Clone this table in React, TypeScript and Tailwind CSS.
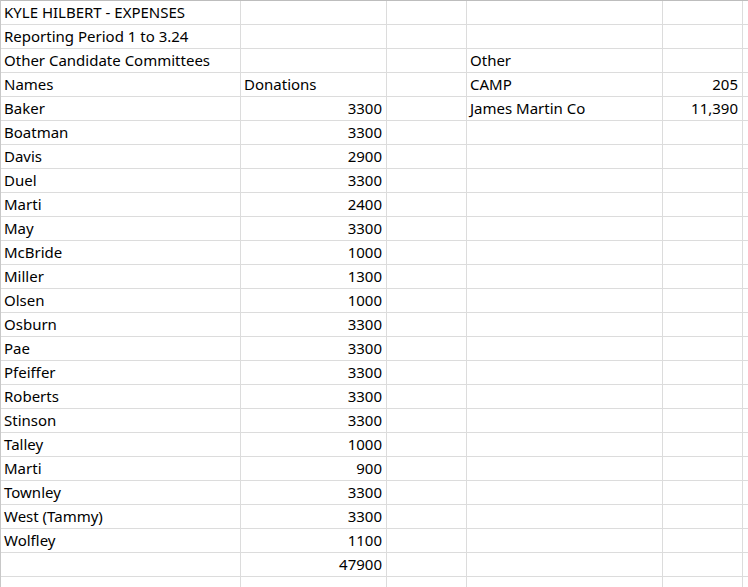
import React from 'react';

type Row = [string, string, string, string, string];

const rows: Row[] = [
  ['KYLE HILBERT - EXPENSES', '', '', '', ''],
  ['Reporting Period 1 to 3.24', '', '', '', ''],
  ['Other Candidate Committees', '', '', 'Other', ''],
  ['Names', 'Donations', '', 'CAMP', '205'],
  ['Baker', '3300', '', 'James Martin Co', '11,390'],
  ['Boatman', '3300', '', '', ''],
  ['Davis', '2900', '', '', ''],
  ['Duel', '3300', '', '', ''],
  ['Marti', '2400', '', '', ''],
  ['May', '3300', '', '', ''],
  ['McBride', '1000', '', '', ''],
  ['Miller', '1300', '', '', ''],
  ['Olsen', '1000', '', '', ''],
  ['Osburn', '3300', '', '', ''],
  ['Pae', '3300', '', '', ''],
  ['Pfeiffer', '3300', '', '', ''],
  ['Roberts', '3300', '', '', ''],
  ['Stinson', '3300', '', '', ''],
  ['Talley', '1000', '', '', ''],
  ['Marti', '900', '', '', ''],
  ['Townley', '3300', '', '', ''],
  ['West (Tammy)', '3300', '', '', ''],
  ['Wolfley', '1100', '', '', ''],
  ['', '47900', '', '', ''],
  ['', '', '', '', ''],
];

// numbers right-aligned like a spreadsheet
const isNum = (v: string) => /^[\d,]+$/.test(v);

export default function App() {
  return (
    <div className="w-[748px] h-[587px] overflow-hidden bg-white font-['Noto_Sans',sans-serif] text-[15px] text-black">
      <div className="grid grid-cols-[240px_146px_80px_196px_80px_60px] border-t border-t-[#bdbdbd] border-l border-l-[#c8c8c8]">
        {rows.map((row, r) => (
          <React.Fragment key={r}>
            {[...row, ''].map((cell, c) => (
              <div
                key={c}
                className={`h-6 border-r border-b border-[#dcdcdc] pl-[3px] pr-1 flex items-end pb-[1px] leading-[22px] whitespace-nowrap ${
                  isNum(cell) ? 'justify-end' : 'justify-start'
                }`}
              >
                {cell}
              </div>
            ))}
          </React.Fragment>
        ))}
      </div>
    </div>
  );
}
